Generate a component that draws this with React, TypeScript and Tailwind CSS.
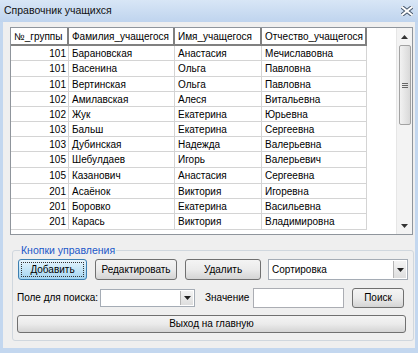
import React from "react";

const rows = [
  { g: "101", f: "Барановская", i: "Анастасия", o: "Мечиславовна", h: "h-[15px]" },
  { g: "101", f: "Васенина", i: "Ольга", o: "Павловна", h: "h-[16px]" },
  { g: "101", f: "Вертинская", i: "Ольга", o: "Павловна", h: "h-[15px]" },
  { g: "102", f: "Амилавская", i: "Алеся", o: "Витальевна", h: "h-[15px]" },
  { g: "102", f: "Жук", i: "Екатерина", o: "Юрьевна", h: "h-[15px]" },
  { g: "103", f: "Бальш", i: "Екатерина", o: "Сергеевна", h: "h-[15px]" },
  { g: "103", f: "Дубинская", i: "Надежда", o: "Валерьевна", h: "h-[15px]" },
  { g: "105", f: "Шебулдаев", i: "Игорь", o: "Валерьевич", h: "h-[16px]" },
  { g: "105", f: "Казанович", i: "Анастасия", o: "Сергеевна", h: "h-[16px]" },
  { g: "201", f: "Асаёнок", i: "Виктория", o: "Игоревна", h: "h-[15px]" },
  { g: "201", f: "Боровко", i: "Екатерина", o: "Васильевна", h: "h-[15px]" },
  { g: "201", f: "Карась", i: "Виктория", o: "Владимировна", h: "h-[16px]" },
];

const btn =
  "rounded-[3px] border border-[#707070] bg-linear-to-b from-[#f4f4f4] via-[#ebebeb] to-[#d4d4d4] flex items-center justify-center text-[10px] leading-none";

const Arrow = () => (
  <div className="w-[13px] h-full border-l border-[#b5b5b5] bg-linear-to-b from-[#f4f4f4] to-[#dedede] flex items-center justify-center">
    <svg width="7" height="4" viewBox="0 0 7 4">
      <path d="M0 0h7L3.5 4z" fill="#222" />
    </svg>
  </div>
);

const App = () => {
  return (
    <div className="w-[418px] h-[353px] flex flex-col bg-[#c3d7ef] overflow-hidden text-[10px] text-black font-['Liberation_Sans',Arial,sans-serif]">
      {/* Title bar */}
      <div className="h-[22px] shrink-0 flex items-center justify-between pl-[4px] pr-[5px] bg-linear-to-b from-[#d8e6f6] to-[#bfd4ee]">
        <span className="text-[10.5px] text-[#111]">Справочник учащихся</span>
        <svg width="12" height="10" viewBox="0 0 12 10">
          <path d="M1 1L11 9M11 1L1 9" stroke="#4a5a6e" strokeWidth="4" strokeLinecap="square" />
          <path d="M1 1L11 9M11 1L1 9" stroke="#ffffff" strokeWidth="2" strokeLinecap="square" />
        </svg>
      </div>

      <div className="flex-1 ml-[3px] mr-[3px] mb-[5px] bg-[#efefef] flex flex-col">
        {/* Grid */}
        <div className="mt-[5px] ml-[7px] w-[403px] h-[208px] border border-[#8f959c] bg-white flex">
          <div className="flex-1 flex flex-col">
            <div className="h-[18px] flex shrink-0">
              <div className="w-[58px] pl-[3px] flex items-center border-r-2 border-b-2 border-[#808080]">№_группы</div>
              <div className="w-[106px] pl-[3px] flex items-center border-r-2 border-b-2 border-[#808080]">Фамилия_учащегося</div>
              <div className="w-[87px] pl-[3px] flex items-center border-r-2 border-b-2 border-[#808080]">Имя_учащегося</div>
              <div className="w-[105px] pl-[3px] flex items-center border-r-2 border-b-2 border-[#808080]">Отчество_учащегося</div>
            </div>
            {rows.map((r, k) => (
              <div key={k} className={`flex shrink-0 ${r.h}`}>
                <div className="w-[58px] pr-[2px] flex items-center justify-end border-r border-b border-[#d4d4d4]">{r.g}</div>
                <div className="w-[106px] pl-[3px] flex items-center border-r border-b border-[#d4d4d4]">{r.f}</div>
                <div className="w-[87px] pl-[3px] flex items-center border-r border-b border-[#d4d4d4]">{r.i}</div>
                <div className="w-[105px] pl-[3px] flex items-center border-r border-b border-[#d4d4d4]">{r.o}</div>
              </div>
            ))}
          </div>
          {/* Scrollbar */}
          <div className="w-[16px] flex flex-col bg-[#f3f3f3] border-l border-[#e6e6e6]">
            <div className="h-[17px] flex items-center justify-center">
              <svg width="7" height="4" viewBox="0 0 7 4">
                <path d="M0 4h7L3.5 0z" fill="#333" />
              </svg>
            </div>
            <div className="ml-[2px] w-[12px] h-[80px] rounded-[2px] border border-[#a2a2a2] bg-linear-to-r from-[#f2f2f2] to-[#d9d9d9] flex items-center justify-center">
              <div className="flex flex-col gap-[1px]">
                <div className="w-[6px] h-[1px] bg-[#666]" />
                <div className="w-[6px] h-[1px] bg-[#666]" />
                <div className="w-[6px] h-[1px] bg-[#666]" />
              </div>
            </div>
            <div className="flex-1" />
            <div className="h-[17px] flex items-center justify-center">
              <svg width="7" height="4" viewBox="0 0 7 4">
                <path d="M0 0h7L3.5 4z" fill="#333" />
              </svg>
            </div>
          </div>
        </div>

        {/* Control group */}
        <fieldset className="mt-[9px] ml-[9px] w-[402px] h-[97px] border border-[#d0d7de] rounded-[3px] px-[4px]">
          <legend className="ml-[3px] px-[1px] text-[#1c58c9] text-[10.5px] leading-[13px]">Кнопки управления</legend>
          <div className="flex flex-col mt-[2px]">
            <div className="flex items-center h-[21px]">
              <button className="ml-[1px] w-[69px] h-[21px] rounded-[3px] border border-[#3c7fb1] bg-linear-to-b from-[#e8f5fd] via-[#c4e5f7] to-[#a4d4f0] flex items-center justify-center p-[2px] text-[10px]">
                <span className="w-full h-full flex items-center justify-center outline-1 outline-dotted outline-[#333] -outline-offset-1">Добавить</span>
              </button>
              <button className={`ml-[8px] w-[82px] h-[21px] ${btn}`}>Редактировать</button>
              <button className={`ml-[8px] w-[76px] h-[21px] ${btn}`}>Удалить</button>
              <div className="ml-[7px] w-[140px] h-[21px] border border-[#a5acb5] bg-white flex">
                <span className="flex-1 pl-[3px] flex items-center">Сортировка</span>
                <div className="p-[1px]"><Arrow /></div>
              </div>
            </div>
            <div className="flex items-center h-[21px] mt-[7px]">
              <span className="w-[83px] shrink-0 whitespace-nowrap">Поле для поиска:</span>
              <div className="w-[95px] h-[18px] border border-[#a5acb5] bg-white flex justify-end">
                <div className="p-[1px]"><Arrow /></div>
              </div>
              <span className="ml-[10px] w-[48px] shrink-0">Значение</span>
              <div className="w-[91px] h-[20px] border border-[#abadb3] bg-white" />
              <button className={`ml-[8px] w-[52px] h-[20px] ${btn}`}>Поиск</button>
            </div>
            <button className={`mt-[7px] w-[389px] h-[18px] ${btn}`}>Выход на главную</button>
          </div>
        </fieldset>
      </div>
    </div>
  );
};

export default App;
